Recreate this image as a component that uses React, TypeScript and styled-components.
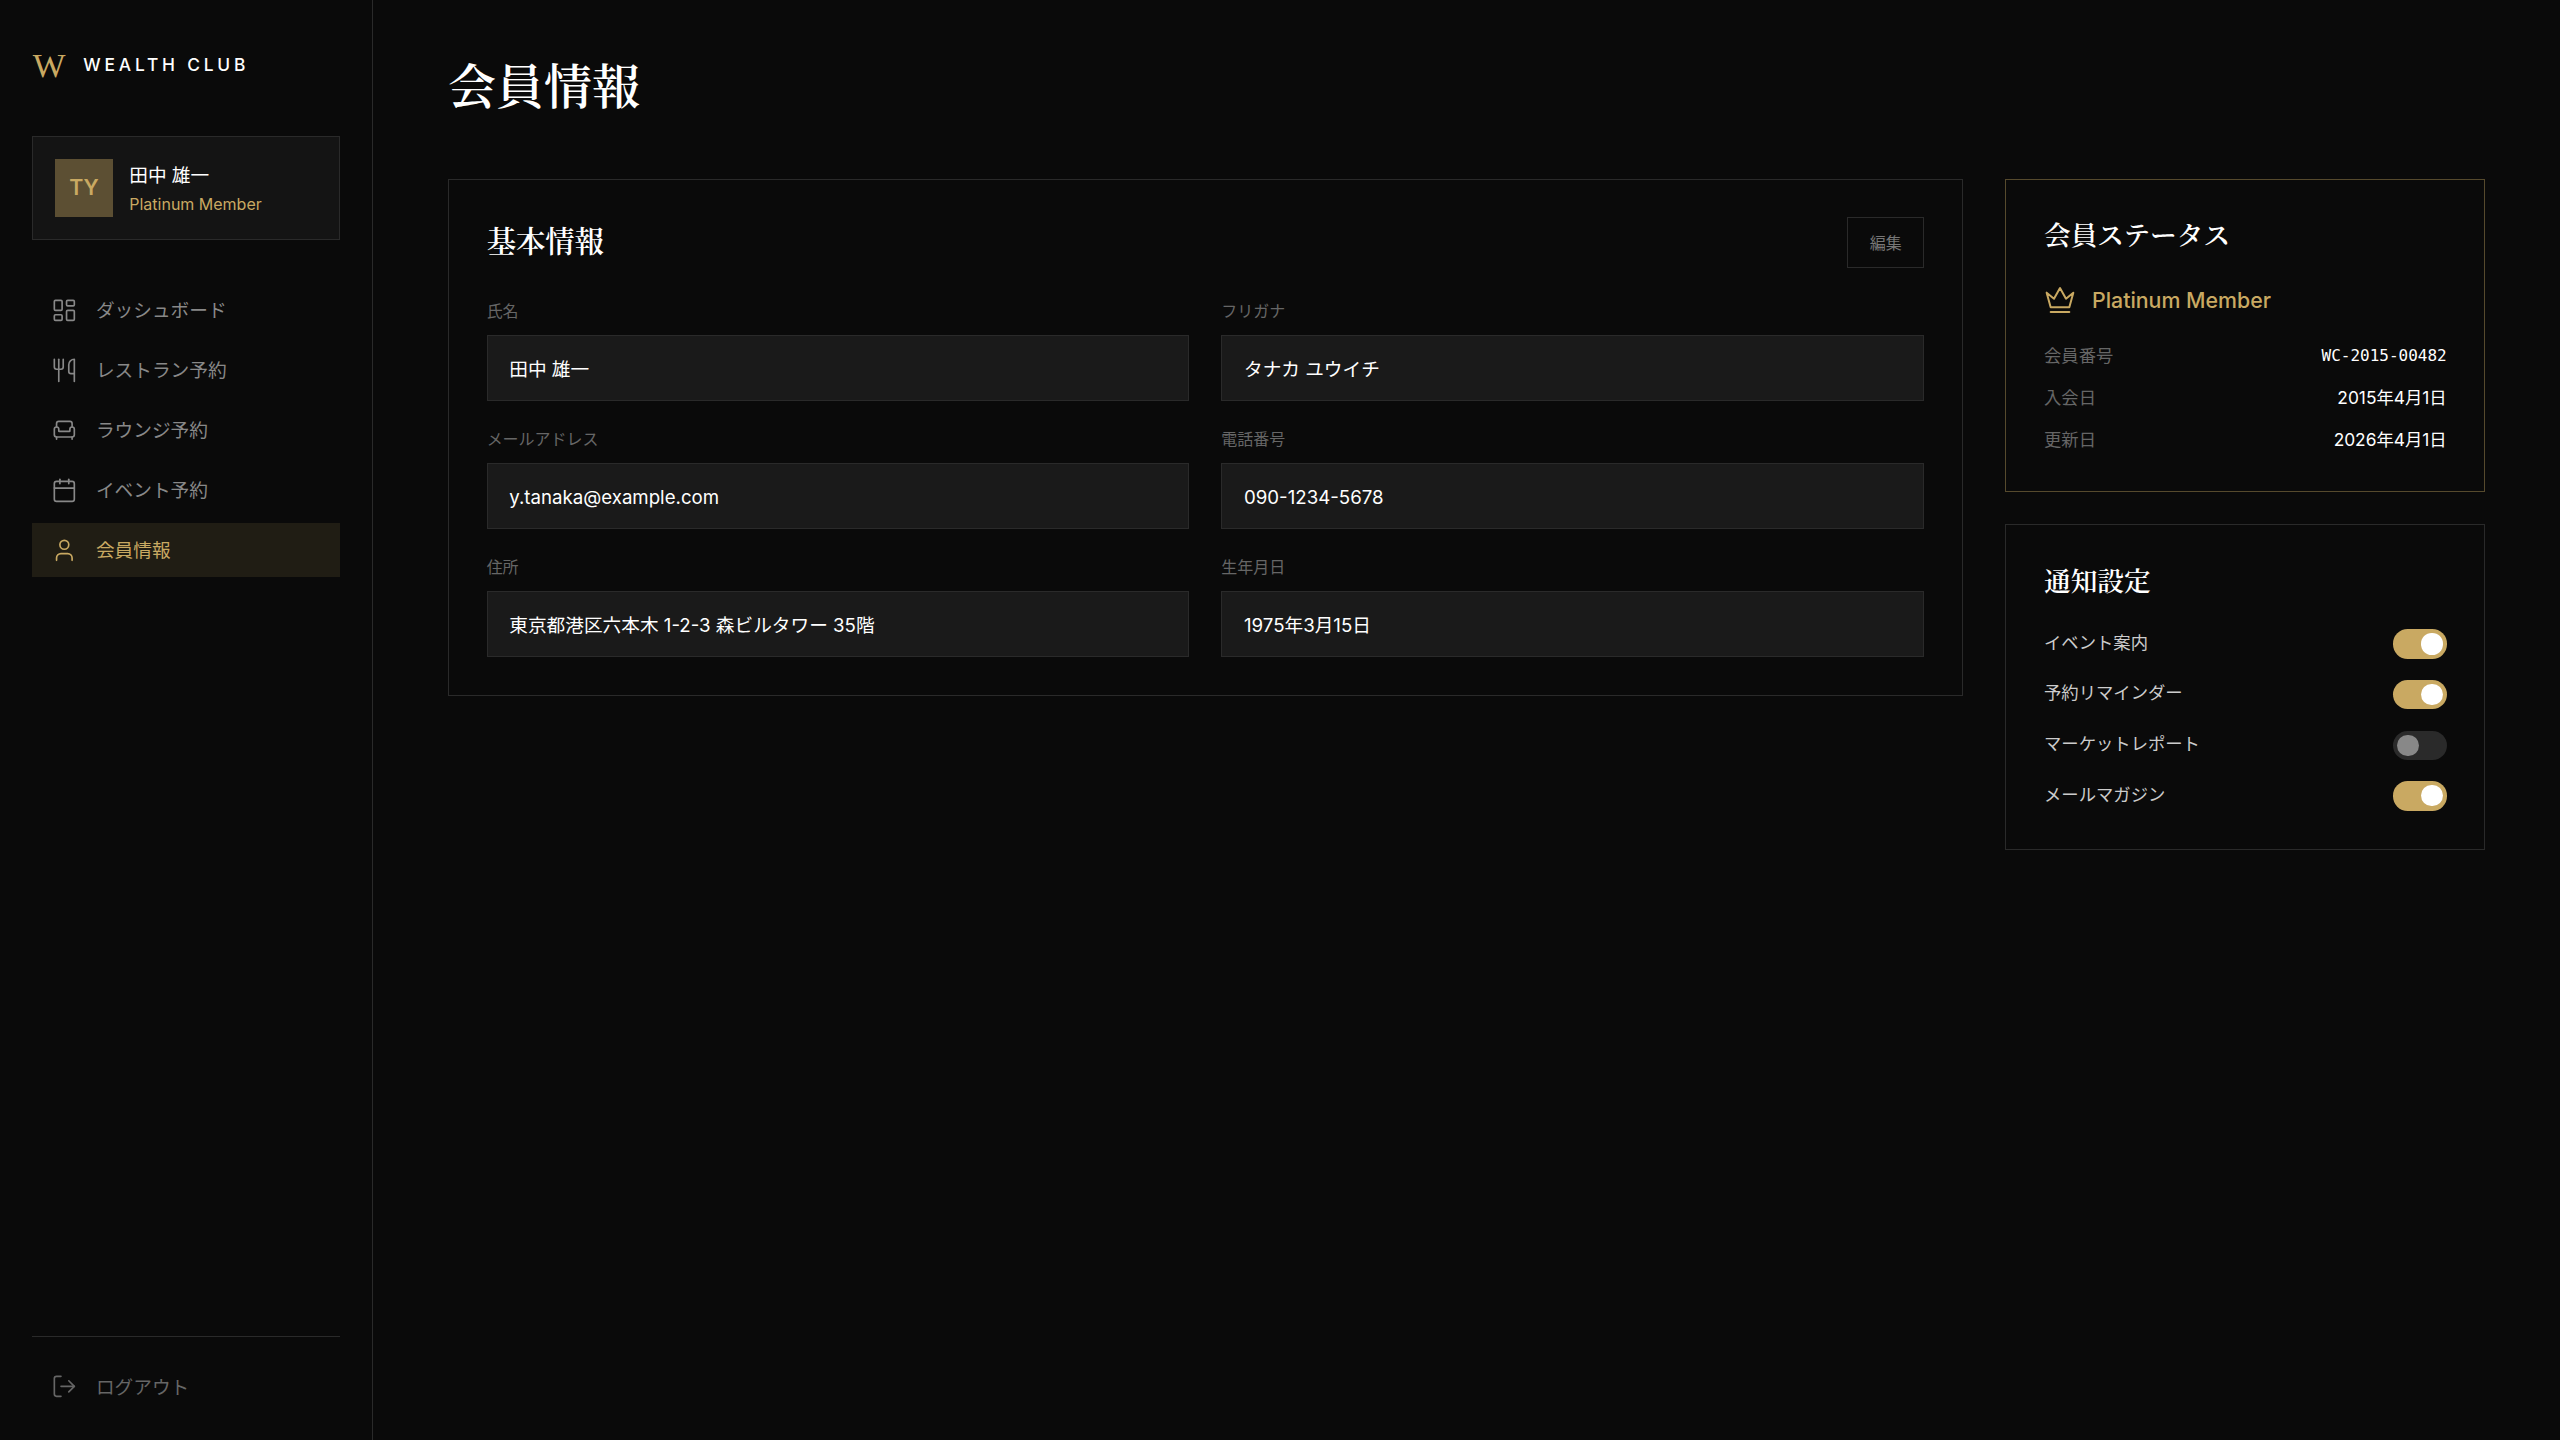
import React from "react";
import styled, { createGlobalStyle } from "styled-components";
import { Armchair, Calendar, LayoutDashboard, LogOut, User, Utensils } from "lucide-react";

const GOLD = "#c9a962";
const SERIF = `"Noto Serif CJK JP", "Noto Serif JP", "Liberation Serif", serif`;

const GlobalStyle = createGlobalStyle`
  html, body {
    margin: 0;
    padding: 0;
    background: #0a0a0a;
  }
  body {
    color: #fff;
    font-family: Inter, "Noto Sans CJK JP", sans-serif;
    font-size: 14px;
    line-height: 1.5;
  }
  * {
    box-sizing: border-box;
  }
`;

// design is 1920x1080, photographed at 2560x1440
const Page = styled.div`
  zoom: 1.33333;
  display: flex;
  width: 1920px;
  height: 1080px;
  background: #0a0a0a;
`;

const Sidebar = styled.aside`
  display: flex;
  flex-direction: column;
  flex: none;
  width: 280px;
  padding: 33px 24px 19.5px;
  border-right: 1px solid #2a2a2a;
`;

const Logo = styled.div`
  display: flex;
  align-items: center;
  gap: 13.5px;
  height: 32px;
  margin-bottom: 37px;
  padding-left: 0.5px;
`;

const LogoMark = styled.span`
  font-family: "Liberation Serif", serif;
  font-size: 26px;
  line-height: 1;
  color: ${GOLD};
`;

const LogoText = styled.span`
  font-size: 13px;
  font-weight: 500;
  letter-spacing: 0.22em;
`;

const UserCard = styled.div`
  display: flex;
  align-items: center;
  gap: 12px;
  padding: 16.25px;
  margin-bottom: 32px;
  background: #141414;
  border: 1px solid #2a2a2a;
`;

const Avatar = styled.div`
  display: flex;
  align-items: center;
  justify-content: center;
  width: 44px;
  height: 44px;
  background: #5c4f33;
  color: ${GOLD};
  font-size: 16px;
  font-weight: 600;
`;

const UserText = styled.div`
  padding-top: 2px;
`;

const UserName = styled.div`
  font-size: 14px;
  line-height: 21px;
`;

const UserTier = styled.div`
  margin-top: 2px;
  font-size: 12px;
  line-height: 18px;
  color: ${GOLD};
`;

const Nav = styled.nav`
  display: flex;
  flex-direction: column;
  flex: 1;
  gap: 4px;
`;

const NavItem = styled.a<{ $active?: boolean }>`
  display: flex;
  align-items: center;
  gap: 14px;
  padding: 10px 14px;
  font-size: 14px;
  color: ${(p) => (p.$active ? GOLD : "#888")};
  background: ${(p) => (p.$active ? "rgba(201, 169, 98, 0.12)" : "transparent")};

  svg {
    flex: none;
    width: 20px;
    height: 20px;
    stroke-width: 1.5;
  }
`;

const NavLabel = styled.span`
  margin: 1px 0 -1px;
`;

const SidebarFooter = styled.div`
  padding-top: 16.5px;
  border-top: 1px solid #2a2a2a;
`;

const LogoutItem = styled(NavItem)`
  color: #666;
`;

const Main = styled.main`
  flex: 1;
  min-width: 0;
  padding: 40px 56px;
`;

const Title = styled.h1`
  margin: 0 0 48px;
  font-family: ${SERIF};
  font-size: 36px;
  font-weight: 600;
  line-height: 46px;
`;

const Columns = styled.div`
  display: grid;
  grid-template-columns: 1fr 360px;
  gap: 32px;
  align-items: start;
`;

const SideColumn = styled.div`
  display: flex;
  flex-direction: column;
  gap: 24px;
`;

const Card = styled.section`
  padding: 28.25px;
  border: 1px solid #2a2a2a;
`;

const SideCard = styled(Card)<{ $gold?: boolean }>`
  padding-bottom: 28.75px;
  border-color: ${(p) => (p.$gold ? "rgba(201, 169, 98, 0.4)" : "#2a2a2a")};
`;

const CardHeader = styled.div`
  display: flex;
  align-items: center;
  justify-content: space-between;
  margin-bottom: 24px;
`;

const CardTitle = styled.h2`
  margin: 0;
  padding-bottom: 4px;
  font-family: ${SERIF};
  font-size: 22px;
  font-weight: 600;
`;

const SideTitle = styled.h3`
  margin: 0 0 24.5px;
  font-family: ${SERIF};
  font-size: 20px;
  font-weight: 600;
  line-height: 25.5px;
`;

const EditButton = styled.button`
  height: 38px;
  padding: 3px 16px 0;
  background: transparent;
  border: 1px solid #2a2a2a;
  border-radius: 0;
  color: #777;
  font-family: inherit;
  font-size: 12px;
  line-height: 20px;
`;

const FieldGrid = styled.div`
  display: grid;
  grid-template-columns: 1fr 1fr;
  gap: 20px 24px;
`;

const FieldLabel = styled.div`
  margin-bottom: 8px;
  font-size: 12px;
  line-height: 18px;
  color: #666;
`;

const FieldValue = styled.div`
  display: flex;
  align-items: center;
  height: 50px;
  padding: 3px 16.25px 0;
  background: #1a1a1a;
  border: 1px solid #2a2a2a;
  font-size: 14px;
  line-height: 20px;
`;

const Tier = styled.div`
  display: flex;
  align-items: center;
  gap: 12px;
  margin-bottom: 20px;
  color: ${GOLD};
  font-size: 16px;
  font-weight: 500;
  line-height: 24px;
`;

const StatusList = styled.div`
  display: flex;
  flex-direction: column;
  gap: 12px;
`;

const StatusRow = styled.div`
  display: flex;
  justify-content: space-between;
  font-size: 13px;
  line-height: 19.5px;
  color: #666;
`;

const StatusValue = styled.span<{ $mono?: boolean }>`
  color: #fff;
  font-family: ${(p) => (p.$mono ? "monospace" : "inherit")};
  font-size: ${(p) => (p.$mono ? "12px" : "13px")};
`;

const ToggleList = styled.div`
  display: flex;
  flex-direction: column;
  gap: 16px;
`;

const ToggleRow = styled.div`
  display: flex;
  align-items: center;
  justify-content: space-between;
  font-size: 13px;
  color: #ccc;
`;

const ToggleLabel = styled.span`
  margin-top: -2px;
`;

const Toggle = styled.span<{ $on?: boolean }>`
  position: relative;
  width: 40px;
  height: 22px;
  border-radius: 11px;
  background: ${(p) => (p.$on ? GOLD : "#2a2a2a")};

  &::after {
    content: "";
    position: absolute;
    top: 3px;
    left: ${(p) => (p.$on ? "21px" : "3px")};
    width: 16px;
    height: 16px;
    border-radius: 50%;
    background: ${(p) => (p.$on ? "#fff" : "#888")};
  }
`;

const navItems = [
  { label: "ダッシュボード", icon: LayoutDashboard },
  { label: "レストラン予約", icon: Utensils },
  { label: "ラウンジ予約", icon: Armchair },
  { label: "イベント予約", icon: Calendar },
  { label: "会員情報", icon: User, active: true },
];

const fields = [
  { label: "氏名", value: "田中 雄一" },
  { label: "フリガナ", value: "タナカ ユウイチ" },
  { label: "メールアドレス", value: "y.tanaka@example.com" },
  { label: "電話番号", value: "090-1234-5678" },
  { label: "住所", value: "東京都港区六本木 1-2-3 森ビルタワー 35階" },
  { label: "生年月日", value: "1975年3月15日" },
];

const notifications = [
  { label: "イベント案内", on: true },
  { label: "予約リマインダー", on: true },
  { label: "マーケットレポート", on: false },
  { label: "メールマガジン", on: true },
];

function CrownIcon() {
  return (
    <svg width="24" height="24" viewBox="0 0 24 24" fill="none" stroke="currentColor" strokeWidth="1.5" strokeLinecap="round" strokeLinejoin="round">
      <path d="M2 6.5 5 17.5H19L22 6.5 16.5 11 12 3 7.5 11Z" />
      <path d="M5 21H19" />
    </svg>
  );
}

export default function App() {
  return (
    <Page>
      <GlobalStyle />
      <Sidebar>
        <Logo>
          <LogoMark>W</LogoMark>
          <LogoText>WEALTH CLUB</LogoText>
        </Logo>
        <UserCard>
          <Avatar>TY</Avatar>
          <UserText>
            <UserName>田中 雄一</UserName>
            <UserTier>Platinum Member</UserTier>
          </UserText>
        </UserCard>
        <Nav>
          {navItems.map((item) => (
            <NavItem key={item.label} $active={item.active}>
              <item.icon />
              <NavLabel>{item.label}</NavLabel>
            </NavItem>
          ))}
        </Nav>
        <SidebarFooter>
          <LogoutItem>
            <LogOut />
            <NavLabel>ログアウト</NavLabel>
          </LogoutItem>
        </SidebarFooter>
      </Sidebar>
      <Main>
        <Title>会員情報</Title>
        <Columns>
          <Card>
            <CardHeader>
              <CardTitle>基本情報</CardTitle>
              <EditButton>編集</EditButton>
            </CardHeader>
            <FieldGrid>
              {fields.map((field) => (
                <div key={field.label}>
                  <FieldLabel>{field.label}</FieldLabel>
                  <FieldValue>{field.value}</FieldValue>
                </div>
              ))}
            </FieldGrid>
          </Card>
          <SideColumn>
            <SideCard $gold>
              <SideTitle>会員ステータス</SideTitle>
              <Tier>
                <CrownIcon />
                Platinum Member
              </Tier>
              <StatusList>
                <StatusRow>
                  会員番号
                  <StatusValue $mono>WC-2015-00482</StatusValue>
                </StatusRow>
                <StatusRow>
                  入会日
                  <StatusValue>2015年4月1日</StatusValue>
                </StatusRow>
                <StatusRow>
                  更新日
                  <StatusValue>2026年4月1日</StatusValue>
                </StatusRow>
              </StatusList>
            </SideCard>
            <SideCard>
              <SideTitle>通知設定</SideTitle>
              <ToggleList>
                {notifications.map((item) => (
                  <ToggleRow key={item.label}>
                    <ToggleLabel>{item.label}</ToggleLabel>
                    <Toggle $on={item.on} />
                  </ToggleRow>
                ))}
              </ToggleList>
            </SideCard>
          </SideColumn>
        </Columns>
      </Main>
    </Page>
  );
}
